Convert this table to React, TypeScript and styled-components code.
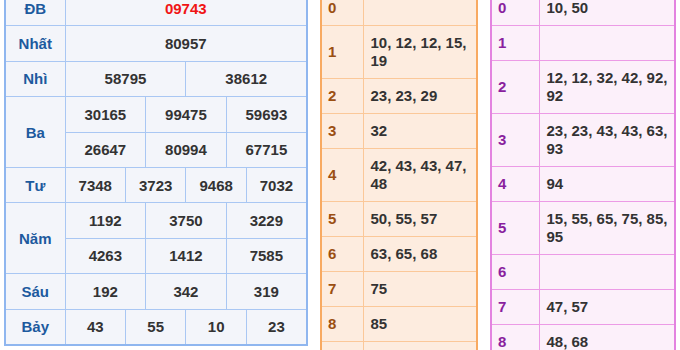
import React from 'react';
import styled, { createGlobalStyle } from 'styled-components';

const GlobalStyle = createGlobalStyle`
  body {
    margin: 0;
    background: #fff;
    font-family: "Liberation Sans", Arial, sans-serif;
  }
`;

interface Prize {
  label: string;
  rows: string[][];
  special?: boolean;
}

const prizes: Prize[] = [
  { label: 'ĐB', rows: [['09743']], special: true },
  { label: 'Nhất', rows: [['80957']] },
  { label: 'Nhì', rows: [['58795', '38612']] },
  {
    label: 'Ba',
    rows: [
      ['30165', '99475', '59693'],
      ['26647', '80994', '67715'],
    ],
  },
  { label: 'Tư', rows: [['7348', '3723', '9468', '7032']] },
  {
    label: 'Năm',
    rows: [
      ['1192', '3750', '3229'],
      ['4263', '1412', '7585'],
    ],
  },
  { label: 'Sáu', rows: [['192', '342', '319']] },
  { label: 'Bảy', rows: [['43', '55', '10', '23']] },
];

const heads = [
  '',
  '10, 12, 12, 15, 19',
  '23, 23, 29',
  '32',
  '42, 43, 43, 47, 48',
  '50, 55, 57',
  '63, 65, 68',
  '75',
  '85',
  '92, 92, 93, 94, 95',
];

const tails = [
  '10, 50',
  '',
  '12, 12, 32, 42, 92, 92',
  '23, 23, 43, 43, 63, 93',
  '94',
  '15, 55, 65, 75, 85, 95',
  '',
  '47, 57',
  '48, 68',
  '19, 29',
];

type Tone = 'orange' | 'purple';

const tones = {
  orange: { bg: '#fdecdf', line: '#fbc899', outer: '#f8aa62', digit: '#9b4f12' },
  purple: { bg: '#fcf0fa', line: '#ec9be6', outer: '#e383e0', digit: '#8a1f9e' },
};

const Page = styled.div`
  display: flex;
  align-items: flex-start;
  gap: 12px;
  padding: 0 4px;
  margin-top: -11px;
`;

const ResultTable = styled.table`
  width: 304px;
  flex: none;
  table-layout: fixed;
  border-collapse: collapse;
  border: 2px solid #8fb6ef;
  background: #f3f5fa;
`;

const PrizeLabel = styled.td`
  height: 34.4px;
  padding: 0;
  border: 1px solid #a9c7f3;
  text-align: center;
  font-size: 15px;
  font-weight: bold;
  color: #1d5a9e;
`;

const Number = styled.td<{ $special?: boolean }>`
  height: 34.4px;
  padding: 0;
  border: 1px solid #a9c7f3;
  text-align: center;
  font-size: 15px;
  font-weight: bold;
  color: ${({ $special }) => ($special ? '#f01414' : '#333')};
`;

const LotoTable = styled.table<{ $tone: Tone; $width: number }>`
  width: ${({ $width }) => $width}px;
  flex: none;
  table-layout: fixed;
  border-collapse: collapse;
  border: 2px solid ${({ $tone }) => tones[$tone].outer};
  background: ${({ $tone }) => tones[$tone].bg};
`;

const Digit = styled.td<{ $tone: Tone }>`
  padding: 8px 6px;
  border: 1px solid ${({ $tone }) => tones[$tone].line};
  font-size: 15px;
  line-height: 18px;
  font-weight: bold;
  color: ${({ $tone }) => tones[$tone].digit};
`;

const Values = styled.td<{ $tone: Tone }>`
  padding: 8px 3px 8px 7px;
  border: 1px solid ${({ $tone }) => tones[$tone].line};
  font-size: 15px;
  line-height: 18px;
  font-weight: bold;
  color: #333;
`;

const Loto = ({
  tone,
  width,
  digitWidth,
  data,
}: {
  tone: Tone;
  width: number;
  digitWidth: number;
  data: string[];
}) => (
  <LotoTable $tone={tone} $width={width}>
    <colgroup>
      <col style={{ width: digitWidth }} />
      <col />
    </colgroup>
    <tbody>
      {data.map((v, i) => (
        <tr key={i}>
          <Digit $tone={tone}>{i}</Digit>
          <Values $tone={tone}>{v}</Values>
        </tr>
      ))}
    </tbody>
  </LotoTable>
);

export default function App() {
  return (
    <>
      <GlobalStyle />
      <Page>
        <ResultTable>
          <colgroup>
            <col style={{ width: 60 }} />
            {Array.from({ length: 12 }, (_, i) => (
              <col key={i} />
            ))}
          </colgroup>
          <tbody>
            {prizes.map((p) =>
              p.rows.map((row, ri) => (
                <tr key={p.label + ri}>
                  {ri === 0 && <PrizeLabel rowSpan={p.rows.length}>{p.label}</PrizeLabel>}
                  {row.map((n, ci) => (
                    <Number key={ci} colSpan={12 / row.length} $special={p.special}>
                      {n}
                    </Number>
                  ))}
                </tr>
              ))
            )}
          </tbody>
        </ResultTable>
        <Loto tone="orange" width={158} digitWidth={42} data={heads} />
        <Loto tone="purple" width={186} digitWidth={48} data={tails} />
      </Page>
    </>
  );
}
